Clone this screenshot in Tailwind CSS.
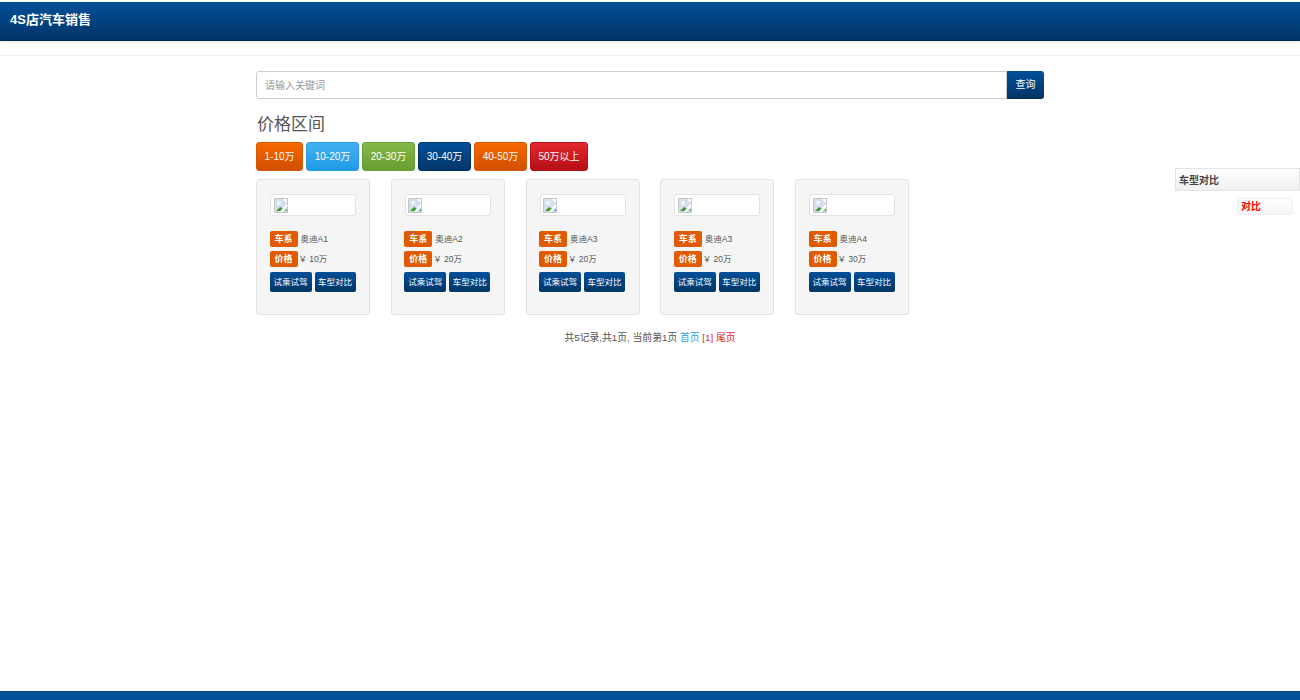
<!DOCTYPE html>
<html lang="zh">
<head>
<meta charset="utf-8">
<script src="https://cdn.jsdelivr.net/npm/@tailwindcss/browser@4"></script>
<title>4S店汽车销售</title>
</head>
<body class="relative h-[700px] overflow-hidden bg-white font-['Liberation_Sans','Noto_Sans_CJK_SC',sans-serif] text-[#555]">
<div class="flex h-full flex-col">
  <div class="h-[2px] bg-white"></div>
  <header class="flex h-[39px] items-center border-b border-[#012a52] bg-gradient-to-b from-[#02509a] to-[#023567] pb-[2px] pl-[10px] shadow-[0_1px_2px_rgba(0,0,0,0.12)]">
    <span class="text-[13px] font-bold text-white">4S店汽车销售</span>
  </header>
  <div class="h-[15px] border-b border-[#eeeeee]"></div>
  <main class="mx-auto mt-[15px] w-[788px] flex-1">
    <div class="flex h-[28px]">
      <div class="flex flex-1 items-center rounded-l-[3px] border border-[#cccccc] bg-white pl-[8px] text-[10px] text-[#999]">请输入关键词</div>
      <button class="w-[37px] rounded-r-[3px] border-b border-[#012a52] bg-gradient-to-b from-[#02509a] to-[#023567] text-[10px] text-white">查询</button>
    </div>
    <h2 class="mt-[13px] h-[30px] pl-px font-['Liberation_Serif','Noto_Sans_CJK_SC',serif] text-[17px] leading-[26px] text-[#555]">价格区间</h2>
    <div class="flex h-[29px] gap-[3px] text-[10px] text-white">
      <a class="flex w-[47px] items-center justify-center rounded-[3px] border border-[#d95a00] bg-gradient-to-b from-[#f96800] to-[#d14f00]">1-10万</a>
      <a class="flex w-[53px] items-center justify-center rounded-[3px] border border-[#2b9fe3] bg-gradient-to-b from-[#43b0ee] to-[#1c9be6]">10-20万</a>
      <a class="flex w-[53px] items-center justify-center rounded-[3px] border border-[#6c9e35] bg-gradient-to-b from-[#86b847] to-[#689d30]">20-30万</a>
      <a class="flex w-[53px] items-center justify-center rounded-[3px] border border-[#023567] bg-gradient-to-b from-[#02509a] to-[#023567]">30-40万</a>
      <a class="flex w-[53px] items-center justify-center rounded-[3px] border border-[#d95a00] bg-gradient-to-b from-[#f96800] to-[#d14f00]">40-50万</a>
      <a class="flex w-[58px] items-center justify-center rounded-[3px] border border-[#b8141e] bg-gradient-to-b from-[#e3262e] to-[#b50f18]">50万以上</a>
    </div>
    <div class="mt-[8px] flex gap-[20.75px]">

      <article class="h-[136px] w-[114px] rounded-[3px] border border-[#e3e3e3] bg-[#f5f5f5] pl-[12.5px] pt-[14px]">
        <div class="ml-[0.5px] flex h-[22px] w-[86px] items-center rounded-[3px] border border-[#e3e3e3] bg-white pl-[2.5px]">
          <svg width="14" height="15" viewBox="0 0 14 15"><path d="M0.5 0.5H13.5V14.5H0.5Z" fill="#d6dfee" stroke="#c4c4c4"/><path d="M9 1L13 5V1Z" fill="#fff"/><circle cx="5" cy="5" r="2.2" fill="#eef3fb"/><path d="M2 13L6 9L9 10.5L8 13Z" fill="#3f9a2c"/><path d="M7 14L13 7" stroke="#fff" stroke-width="2"/><path d="M11 13L13 11V13Z" fill="#3f9a2c"/></svg>
        </div>
        <div class="mt-[15px] flex h-[16px] items-center text-[8.5px] leading-none">
          <span class="flex h-[16px] w-[28px] items-center justify-center rounded-[2px] bg-[#e05a00] text-[9px] font-bold text-white">车系</span><span class="ml-[3px]">奥迪A1</span>
        </div>
        <div class="mt-[4px] flex h-[16px] items-center text-[8.5px] leading-none">
          <span class="flex h-[16px] w-[28px] items-center justify-center rounded-[2px] bg-[#e05a00] text-[9px] font-bold text-white">价格</span><span class="ml-[1px]">￥ 10万</span>
        </div>
        <div class="mt-[5px] flex gap-[3px] text-[8.5px]">
          <a class="flex h-[20px] w-[42px] items-center justify-center rounded-[2px] bg-gradient-to-b from-[#02509a] to-[#023567] text-white">试乘试驾</a>
          <a class="flex h-[20px] w-[41px] items-center justify-center rounded-[2px] bg-gradient-to-b from-[#02509a] to-[#023567] text-white">车型对比</a>
        </div>
      </article>

      <article class="h-[136px] w-[114px] rounded-[3px] border border-[#e3e3e3] bg-[#f5f5f5] pl-[12.5px] pt-[14px]">
        <div class="ml-[0.5px] flex h-[22px] w-[86px] items-center rounded-[3px] border border-[#e3e3e3] bg-white pl-[2.5px]">
          <svg width="14" height="15" viewBox="0 0 14 15"><path d="M0.5 0.5H13.5V14.5H0.5Z" fill="#d6dfee" stroke="#c4c4c4"/><path d="M9 1L13 5V1Z" fill="#fff"/><circle cx="5" cy="5" r="2.2" fill="#eef3fb"/><path d="M2 13L6 9L9 10.5L8 13Z" fill="#3f9a2c"/><path d="M7 14L13 7" stroke="#fff" stroke-width="2"/><path d="M11 13L13 11V13Z" fill="#3f9a2c"/></svg>
        </div>
        <div class="mt-[15px] flex h-[16px] items-center text-[8.5px] leading-none">
          <span class="flex h-[16px] w-[28px] items-center justify-center rounded-[2px] bg-[#e05a00] text-[9px] font-bold text-white">车系</span><span class="ml-[3px]">奥迪A2</span>
        </div>
        <div class="mt-[4px] flex h-[16px] items-center text-[8.5px] leading-none">
          <span class="flex h-[16px] w-[28px] items-center justify-center rounded-[2px] bg-[#e05a00] text-[9px] font-bold text-white">价格</span><span class="ml-[1px]">￥ 20万</span>
        </div>
        <div class="mt-[5px] flex gap-[3px] text-[8.5px]">
          <a class="flex h-[20px] w-[42px] items-center justify-center rounded-[2px] bg-gradient-to-b from-[#02509a] to-[#023567] text-white">试乘试驾</a>
          <a class="flex h-[20px] w-[41px] items-center justify-center rounded-[2px] bg-gradient-to-b from-[#02509a] to-[#023567] text-white">车型对比</a>
        </div>
      </article>

      <article class="h-[136px] w-[114px] rounded-[3px] border border-[#e3e3e3] bg-[#f5f5f5] pl-[12.5px] pt-[14px]">
        <div class="ml-[0.5px] flex h-[22px] w-[86px] items-center rounded-[3px] border border-[#e3e3e3] bg-white pl-[2.5px]">
          <svg width="14" height="15" viewBox="0 0 14 15"><path d="M0.5 0.5H13.5V14.5H0.5Z" fill="#d6dfee" stroke="#c4c4c4"/><path d="M9 1L13 5V1Z" fill="#fff"/><circle cx="5" cy="5" r="2.2" fill="#eef3fb"/><path d="M2 13L6 9L9 10.5L8 13Z" fill="#3f9a2c"/><path d="M7 14L13 7" stroke="#fff" stroke-width="2"/><path d="M11 13L13 11V13Z" fill="#3f9a2c"/></svg>
        </div>
        <div class="mt-[15px] flex h-[16px] items-center text-[8.5px] leading-none">
          <span class="flex h-[16px] w-[28px] items-center justify-center rounded-[2px] bg-[#e05a00] text-[9px] font-bold text-white">车系</span><span class="ml-[3px]">奥迪A3</span>
        </div>
        <div class="mt-[4px] flex h-[16px] items-center text-[8.5px] leading-none">
          <span class="flex h-[16px] w-[28px] items-center justify-center rounded-[2px] bg-[#e05a00] text-[9px] font-bold text-white">价格</span><span class="ml-[1px]">￥ 20万</span>
        </div>
        <div class="mt-[5px] flex gap-[3px] text-[8.5px]">
          <a class="flex h-[20px] w-[42px] items-center justify-center rounded-[2px] bg-gradient-to-b from-[#02509a] to-[#023567] text-white">试乘试驾</a>
          <a class="flex h-[20px] w-[41px] items-center justify-center rounded-[2px] bg-gradient-to-b from-[#02509a] to-[#023567] text-white">车型对比</a>
        </div>
      </article>

      <article class="h-[136px] w-[114px] rounded-[3px] border border-[#e3e3e3] bg-[#f5f5f5] pl-[12.5px] pt-[14px]">
        <div class="ml-[0.5px] flex h-[22px] w-[86px] items-center rounded-[3px] border border-[#e3e3e3] bg-white pl-[2.5px]">
          <svg width="14" height="15" viewBox="0 0 14 15"><path d="M0.5 0.5H13.5V14.5H0.5Z" fill="#d6dfee" stroke="#c4c4c4"/><path d="M9 1L13 5V1Z" fill="#fff"/><circle cx="5" cy="5" r="2.2" fill="#eef3fb"/><path d="M2 13L6 9L9 10.5L8 13Z" fill="#3f9a2c"/><path d="M7 14L13 7" stroke="#fff" stroke-width="2"/><path d="M11 13L13 11V13Z" fill="#3f9a2c"/></svg>
        </div>
        <div class="mt-[15px] flex h-[16px] items-center text-[8.5px] leading-none">
          <span class="flex h-[16px] w-[28px] items-center justify-center rounded-[2px] bg-[#e05a00] text-[9px] font-bold text-white">车系</span><span class="ml-[3px]">奥迪A3</span>
        </div>
        <div class="mt-[4px] flex h-[16px] items-center text-[8.5px] leading-none">
          <span class="flex h-[16px] w-[28px] items-center justify-center rounded-[2px] bg-[#e05a00] text-[9px] font-bold text-white">价格</span><span class="ml-[1px]">￥ 20万</span>
        </div>
        <div class="mt-[5px] flex gap-[3px] text-[8.5px]">
          <a class="flex h-[20px] w-[42px] items-center justify-center rounded-[2px] bg-gradient-to-b from-[#02509a] to-[#023567] text-white">试乘试驾</a>
          <a class="flex h-[20px] w-[41px] items-center justify-center rounded-[2px] bg-gradient-to-b from-[#02509a] to-[#023567] text-white">车型对比</a>
        </div>
      </article>

      <article class="h-[136px] w-[114px] rounded-[3px] border border-[#e3e3e3] bg-[#f5f5f5] pl-[12.5px] pt-[14px]">
        <div class="ml-[0.5px] flex h-[22px] w-[86px] items-center rounded-[3px] border border-[#e3e3e3] bg-white pl-[2.5px]">
          <svg width="14" height="15" viewBox="0 0 14 15"><path d="M0.5 0.5H13.5V14.5H0.5Z" fill="#d6dfee" stroke="#c4c4c4"/><path d="M9 1L13 5V1Z" fill="#fff"/><circle cx="5" cy="5" r="2.2" fill="#eef3fb"/><path d="M2 13L6 9L9 10.5L8 13Z" fill="#3f9a2c"/><path d="M7 14L13 7" stroke="#fff" stroke-width="2"/><path d="M11 13L13 11V13Z" fill="#3f9a2c"/></svg>
        </div>
        <div class="mt-[15px] flex h-[16px] items-center text-[8.5px] leading-none">
          <span class="flex h-[16px] w-[28px] items-center justify-center rounded-[2px] bg-[#e05a00] text-[9px] font-bold text-white">车系</span><span class="ml-[3px]">奥迪A4</span>
        </div>
        <div class="mt-[4px] flex h-[16px] items-center text-[8.5px] leading-none">
          <span class="flex h-[16px] w-[28px] items-center justify-center rounded-[2px] bg-[#e05a00] text-[9px] font-bold text-white">价格</span><span class="ml-[1px]">￥ 30万</span>
        </div>
        <div class="mt-[5px] flex gap-[3px] text-[8.5px]">
          <a class="flex h-[20px] w-[42px] items-center justify-center rounded-[2px] bg-gradient-to-b from-[#02509a] to-[#023567] text-white">试乘试驾</a>
          <a class="flex h-[20px] w-[41px] items-center justify-center rounded-[2px] bg-gradient-to-b from-[#02509a] to-[#023567] text-white">车型对比</a>
        </div>
      </article>

    </div>
    <p class="mt-[15px] text-center text-[9.8px] leading-[16px] text-[#555]">共5记录,共1页, 当前第1页 <a class="text-[#2b9fe3]">首页</a> <a class="text-[#e3262e]">[1]</a> <a class="text-[#e3262e]">尾页</a></p>
  </main>
  <footer class="h-[9px] bg-[#02509a]"></footer>
</div>
<aside class="absolute left-[1175px] top-[168px] w-[125px]">
  <div class="flex h-[23px] items-center border border-[#e3e3e3] bg-gradient-to-b from-white to-[#f0f0f0] pl-[3px] pt-px text-[10px] font-bold text-[#444]">车型对比</div>
  <div class="ml-[62px] mt-[7px] flex h-[17px] w-[56px] items-center rounded-[3px] border border-[#eeeeee] bg-gradient-to-b from-white to-[#f5f5f5] pl-[3px] text-[10px] font-bold text-[#ff0000]">对比</div>
</aside>
</body>
</html>
